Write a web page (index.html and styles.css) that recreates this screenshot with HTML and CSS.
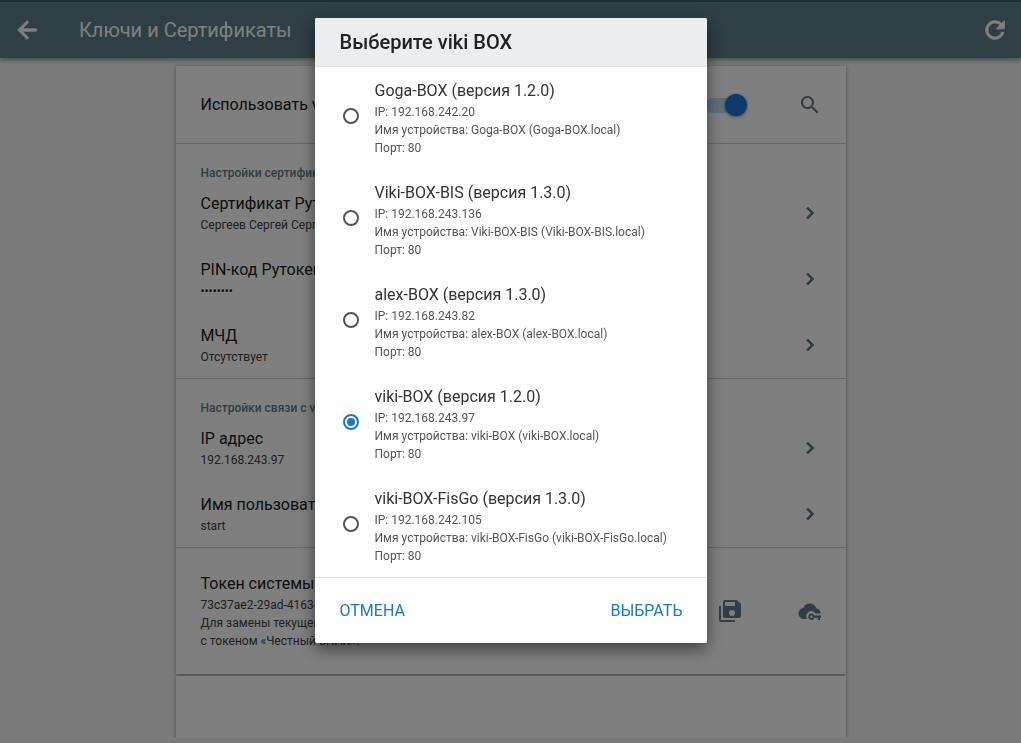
FILE: index.html
```html
<!DOCTYPE html>
<html lang="ru">
<head>
<meta charset="utf-8">
<title>Ключи и Сертификаты</title>
<meta name="viewport" content="width=device-width, initial-scale=1">
<link rel="stylesheet" href="styles.css">
</head>
<body>
<header class="bar">
  <button class="icon-btn" aria-label="Назад"><svg class="icon-lg icon-bold" viewBox="0 0 24 24"><path d="M20 11H7.83l5.59-5.59L12 4l-8 8 8 8 1.41-1.41L7.83 13H20v-2z"/></svg></button>
  <h1 class="bar-title">Ключи и Сертификаты</h1>
  <button class="icon-btn" aria-label="Обновить"><svg class="icon-lg icon-bold" viewBox="0 0 24 24"><path d="M17.65 6.35C16.2 4.9 14.21 4 12 4c-4.42 0-7.99 3.58-7.99 8s3.57 8 7.99 8c3.73 0 6.84-2.55 7.73-6h-2.08c-.82 2.33-3.04 4-5.65 4-3.31 0-6-2.69-6-6s2.69-6 6-6c1.66 0 3.14.69 4.22 1.78L13 11h7V4l-2.35 2.35z"/></svg></button>
</header>

<main class="page">
  <div class="card">
    <section class="group usage">
      <label class="row-title grow" for="use-box">Использовать viki BOX</label>
      <input class="switch" type="checkbox" role="switch" id="use-box" checked>
      <button class="icon-btn" aria-label="Поиск"><svg class="icon" viewBox="0 0 24 24"><path d="M15.5 14h-.79l-.28-.27C15.41 12.59 16 11.11 16 9.5 16 5.91 13.09 3 9.5 3S3 5.91 3 9.5 5.91 16 9.5 16c1.61 0 3.09-.59 4.23-1.57l.27.28v.79l5 4.99L20.49 19l-4.99-5zm-6 0C7.01 14 5 11.99 5 9.5S7.01 5 9.5 5 14 7.01 14 9.5 11.99 14 9.5 14z"/></svg></button>
    </section>

    <section class="group">
      <h2 class="caption">Настройки сертификатов</h2>
      <button class="row"><span class="grow"><span class="row-title">Сертификат Рутокен</span><span class="row-text">Сергеев Сергей Сергеевич</span></span><svg class="icon icon-bold" viewBox="0 0 24 24"><path d="M10 6L8.59 7.41 13.17 12l-4.58 4.59L10 18l6-6z"/></svg></button>
      <button class="row"><span class="grow"><span class="row-title">PIN-код Рутокен</span><span class="row-text dots">••••••••</span></span><svg class="icon icon-bold" viewBox="0 0 24 24"><path d="M10 6L8.59 7.41 13.17 12l-4.58 4.59L10 18l6-6z"/></svg></button>
      <button class="row"><span class="grow"><span class="row-title">МЧД</span><span class="row-text">Отсутствует</span></span><svg class="icon icon-bold" viewBox="0 0 24 24"><path d="M10 6L8.59 7.41 13.17 12l-4.58 4.59L10 18l6-6z"/></svg></button>
    </section>

    <section class="group">
      <h2 class="caption">Настройки связи с viki BOX</h2>
      <button class="row"><span class="grow"><span class="row-title">IP адрес</span><span class="row-text">192.168.243.97</span></span><svg class="icon icon-bold" viewBox="0 0 24 24"><path d="M10 6L8.59 7.41 13.17 12l-4.58 4.59L10 18l6-6z"/></svg></button>
      <button class="row"><span class="grow"><span class="row-title">Имя пользователя</span><span class="row-text">start</span></span><svg class="icon icon-bold" viewBox="0 0 24 24"><path d="M10 6L8.59 7.41 13.17 12l-4.58 4.59L10 18l6-6z"/></svg></button>
    </section>

    <section class="token">
      <div class="grow">
        <h2 class="row-title">Токен системы</h2>
        <p class="row-text">73c37ae2-29ad-4163-</p>
        <p class="row-text">Для замены текущего</p>
        <p class="row-text">с токеном «Честный ЗНАК».</p>
      </div>
      <button class="icon-btn" aria-label="Загрузить из файла"><svg class="icon" viewBox="0 0 24 24"><path d="M17,7V3H7V7H17M14,17A3,3 0 0,0 17,14A3,3 0 0,0 14,11A3,3 0 0,0 11,14A3,3 0 0,0 14,17M19,1L23,5V17A2,2 0 0,1 21,19H7C5.89,19 5,18.1 5,17V3A2,2 0 0,1 7,1H19M1,7H3V21H17V23H3A2,2 0 0,1 1,21V7Z"/></svg></button>
      <button class="icon-btn" aria-label="Получить из облака"><svg class="icon" viewBox="0 0 24 24"><path d="M9 20H6.500A5.500 5.500 0 0 1 5.400 9A6.700 6.700 0 0 1 18.300 9.600A4.800 4.800 0 0 1 22.500 14.400H17.600A5 5 0 0 0 9 20Z"/><path fill-rule="evenodd" d="M13.500 14.500A3.200 3.200 0 0 1 16.500 16.600H23V18.700H22V21H19.800V18.700H16.500A3.200 3.200 0 1 1 13.500 14.500ZM13.500 16.500A1.200 1.200 0 1 0 13.500 18.900A1.200 1.200 0 1 0 13.500 16.500Z"/></svg></button>
    </section>
  </div>
  <div class="card card-empty"></div>
</main>

<div class="scrim">
  <form class="dialog" role="dialog" aria-modal="true" aria-labelledby="dialog-title">
    <h2 class="dialog-title" id="dialog-title">Выберите viki BOX</h2>
    <div class="options">
      <label class="option"><input class="radio" type="radio" name="box"><span class="option-body"><span class="option-title">Goga-BOX (версия 1.2.0)</span><span class="option-text">IP: 192.168.242.20</span><span class="option-text">Имя устройства: Goga-BOX (Goga-BOX.local)</span><span class="option-text">Порт: 80</span></span></label>
      <label class="option"><input class="radio" type="radio" name="box"><span class="option-body"><span class="option-title">Viki-BOX-BIS (версия 1.3.0)</span><span class="option-text">IP: 192.168.243.136</span><span class="option-text">Имя устройства: Viki-BOX-BIS (Viki-BOX-BIS.local)</span><span class="option-text">Порт: 80</span></span></label>
      <label class="option"><input class="radio" type="radio" name="box"><span class="option-body"><span class="option-title">alex-BOX (версия 1.3.0)</span><span class="option-text">IP: 192.168.243.82</span><span class="option-text">Имя устройства: alex-BOX (alex-BOX.local)</span><span class="option-text">Порт: 80</span></span></label>
      <label class="option"><input class="radio" type="radio" name="box" checked><span class="option-body"><span class="option-title">viki-BOX (версия 1.2.0)</span><span class="option-text">IP: 192.168.243.97</span><span class="option-text">Имя устройства: viki-BOX (viki-BOX.local)</span><span class="option-text">Порт: 80</span></span></label>
      <label class="option"><input class="radio" type="radio" name="box"><span class="option-body"><span class="option-title">viki-BOX-FisGo (версия 1.3.0)</span><span class="option-text">IP: 192.168.242.105</span><span class="option-text">Имя устройства: viki-BOX-FisGo (viki-BOX-FisGo.local)</span><span class="option-text">Порт: 80</span></span></label>
    </div>
    <div class="actions">
      <button class="action" type="button">ОТМЕНА</button>
      <button class="action" type="button">ВЫБРАТЬ</button>
    </div>
  </form>
</div>
</body>
</html>
```
FILE: styles.css
```css
* {
  box-sizing: border-box;
}

body {
  margin: 0;
  background: #f5f5f5;
  color: #212121;
  font-family: Roboto, "Liberation Sans", sans-serif;
  font-size: 16px;
}

h1, h2, p {
  margin: 0;
  font-weight: 400;
}

button {
  padding: 0;
  border: 0;
  background: none;
  color: inherit;
  font: inherit;
  cursor: pointer;
}

.grow {
  flex: 1;
}

.icon {
  display: block;
  width: 24px;
  height: 24px;
  fill: #607d8b;
  color: #607d8b;
}

.icon-lg {
  display: block;
  width: 28px;
  height: 28px;
  fill: currentColor;
}

.icon-bold {
  stroke: currentColor;
  stroke-width: 0.8;
}

/* Top bar */
.bar {
  display: flex;
  align-items: center;
  padding: 0 12px 0 13px;
  height: 58px;
  border-top: 2px solid #455a64;
  background: #607d8b;
  color: #fff;
  box-shadow: 0 2px 5px rgba(0, 0, 0, 0.4);
}

.bar-title {
  flex: 1;
  padding-left: 38px;
  font-size: 20px;
  font-weight: 400;
}

/* Settings cards */
.page {
  display: flex;
  flex-direction: column;
  gap: 2px;
  max-width: 670px;
  margin: 8px auto 0;
}

.card {
  background: #fff;
  box-shadow: 0 1px 4px rgba(0, 0, 0, 0.4);
}

.card-empty {
  height: 62px;
}

.group {
  border-bottom: 1px solid #cfcfcf;
}

.usage {
  display: flex;
  align-items: center;
  padding: 27px 24px 26px 25px;
}

.caption {
  padding: 22px 24px 0 25px;
  color: #607d8b;
  font-size: 12px;
  font-weight: 500;
  line-height: 14px;
}

.row {
  display: flex;
  align-items: center;
  width: 100%;
  padding: 12px 24px 12px 25px;
  text-align: left;
}

.row-title {
  display: block;
  font-size: 16px;
  line-height: 24px;
}

.row-text {
  display: block;
  color: #424242;
  font-size: 12px;
  line-height: 18px;
}

.dots {
  color: #212121;
}

.switch {
  appearance: none;
  display: flex;
  align-items: center;
  justify-content: flex-end;
  width: 42px;
  height: 15px;
  margin: 0 51px 0 0;
  border-radius: 8px;
  background: #bbdefb;
}

.switch::before {
  content: "";
  width: 22px;
  height: 22px;
  flex: none;
  border-radius: 50%;
  background: #1976d2;
  box-shadow: 0 1px 3px rgba(0, 0, 0, 0.5);
}

.token {
  display: flex;
  align-items: center;
  gap: 56px;
  padding: 24px 24px 24px 25px;
}

/* Dialog */
.scrim {
  position: fixed;
  inset: 0;
  display: flex;
  align-items: flex-start;
  justify-content: center;
  padding: 18px 16px;
  background: rgba(0, 0, 0, 0.5);
}

.dialog {
  width: 100%;
  max-width: 392px;
  border-radius: 2px;
  background: #fff;
  box-shadow: 0 6px 16px rgba(0, 0, 0, 0.5);
}

.dialog-title {
  padding: 12px 24px 12px 25px;
  border-bottom: 1px solid #dfe2e3;
  border-radius: 2px 2px 0 0;
  background: #eaeeef;
  font-size: 20px;
  font-weight: 500;
  line-height: 24px;
}

.option {
  display: flex;
  align-items: center;
  gap: 16px;
  padding: 12px 24px 12px 28px;
}

.radio {
  appearance: none;
  flex: none;
  width: 16px;
  height: 16px;
  margin: 0 0 4px;
  border: 2px solid #555;
  border-radius: 50%;
}

.radio:checked {
  padding: 2px;
  border-color: #1976d2;
  background: #1976d2 content-box;
}

.option-title {
  display: block;
  color: #333;
  font-size: 16px;
  line-height: 24px;
}

.option-text {
  display: block;
  color: #555;
  font-size: 12px;
  line-height: 18px;
}

.actions {
  display: flex;
  justify-content: space-between;
  padding: 21px 24px 20px 25px;
  border-top: 1px solid #e0e0e0;
}

.action {
  color: #1976d2;
  font-size: 16px;
  line-height: 24px;
}
```
